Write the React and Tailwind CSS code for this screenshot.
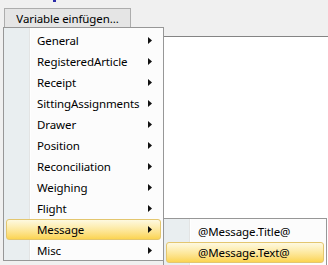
import React from 'react';

const mainItems = [
  'General',
  'RegisteredArticle',
  'Receipt',
  'SittingAssignments',
  'Drawer',
  'Position',
  'Reconciliation',
  'Weighing',
  'Flight',
  'Message',
  'Misc',
];

const subItems = ['@Message.Title@', '@Message.Text@'];

const font = { fontFamily: '"Noto Sans", "Open Sans", sans-serif' };

const Arrow = () => (
  <svg width="4" height="7" viewBox="0 0 4 7" className="block">
    <polygon points="0,0 4,3.5 0,7" fill="#111" />
  </svg>
);

const Highlight = () => (
  <div className="absolute inset-0 rounded-[3px] border border-[#e3c66f] bg-gradient-to-b from-[#fef9e0] via-[#fde9a0] to-[#fbd44f]" />
);

// gutter on the left of a popup menu, with its two-tone separator
const Gutter = () => (
  <div className="absolute left-0 top-0 bottom-0 w-[27px] bg-[#e9eef0] border-r-2 border-r-[#e3e4e4]">
    <div className="absolute right-[-2px] top-0 bottom-0 w-px bg-white" />
  </div>
);

const MenuItem = ({ label, active, hasArrow, pl }) => (
  <div className={`relative h-[21px] flex items-center ${pl}`}>
    {active && <Highlight />}
    <span className="relative flex-1 text-[11.5px] tracking-[-0.1px] leading-none text-black">{label}</span>
    {hasArrow && (
      <span className="relative mr-[9px]">
        <Arrow />
      </span>
    )}
  </div>
);

const App = () => {
  return (
    <div className="relative w-[328px] h-[265px] overflow-hidden bg-[#f0f0f0]" style={font}>
      {/* bit of the line above, cut off */}
      <div className="absolute left-[53px] top-0 w-[3px] h-[2px] bg-[#2a2aa8]" />

      <div className="pl-[4px] pt-[5px]">
        <button className="w-[127px] h-[21px] border border-[#adadad] bg-[#e5e5e5] text-[11.5px] tracking-[-0.1px] text-black leading-none">
          Variable einfügen...
        </button>
      </div>

      {/* editor panel behind the menu */}
      <div className="ml-[163px] mt-[7px] h-[240px] bg-white border-t border-[#848484]" />

      {/* context menu */}
      <div className="absolute left-[3px] top-[27px] w-[161px] h-[234px] border border-[#979797] bg-[#fcfcfc] p-[2px]">
        <Gutter />
        <div className="relative flex flex-col">
          {mainItems.map((item) => (
            <MenuItem key={item} label={item} active={item === 'Message'} hasArrow pl="pl-[31px]" />
          ))}
        </div>
      </div>

      {/* submenu */}
      <div className="absolute left-[163px] top-[218px] w-[164px] h-[60px] border border-[#979797] bg-[#fcfcfc] p-[2px]">
        <Gutter />
        <div className="relative flex flex-col">
          {subItems.map((item, i) => (
            <MenuItem key={item} label={item} active={i === 1} pl="pl-[32px]" />
          ))}
        </div>
      </div>
    </div>
  );
};

export default App;
